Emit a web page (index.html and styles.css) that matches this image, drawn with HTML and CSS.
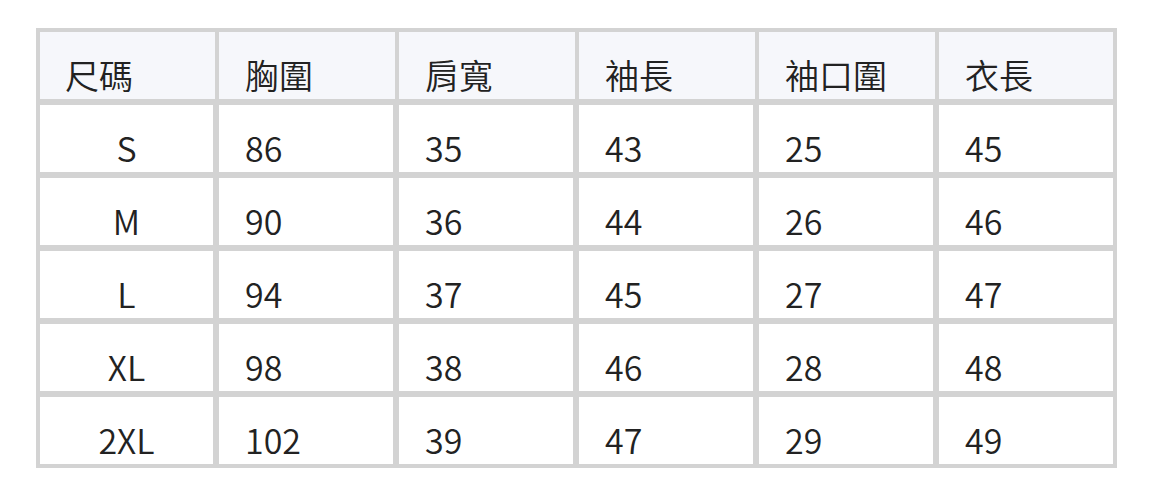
FILE: index.html
```html
<!DOCTYPE html>
<html lang="zh-Hant">
<head>
<meta charset="utf-8">
<title>尺碼表</title>
<link rel="stylesheet" href="styles.css">
</head>
<body>
<table class="size-table">
  <colgroup>
    <col class="c-first">
    <col class="c-mid">
    <col class="c-mid">
    <col class="c-mid">
    <col class="c-mid">
    <col class="c-last">
  </colgroup>
  <thead>
    <tr><th>尺碼</th><th>胸圍</th><th>肩寬</th><th>袖長</th><th>袖口圍</th><th>衣長</th></tr>
  </thead>
  <tbody>
    <tr><td>S</td><td>86</td><td>35</td><td>43</td><td>25</td><td>45</td></tr>
    <tr><td>M</td><td>90</td><td>36</td><td>44</td><td>26</td><td>46</td></tr>
    <tr><td>L</td><td>94</td><td>37</td><td>45</td><td>27</td><td>47</td></tr>
    <tr><td>XL</td><td>98</td><td>38</td><td>46</td><td>28</td><td>48</td></tr>
    <tr class="last"><td>2XL</td><td>102</td><td>39</td><td>47</td><td>29</td><td>49</td></tr>
  </tbody>
</table>
</body>
</html>
```
FILE: styles.css
```css
html, body {
  background: #ffffff;
}
body {
  margin: 28px 0 0 36px;
  font-family: "Noto Sans CJK TC", "Noto Sans", sans-serif;
  color: #222222;
}
.size-table {
  border-collapse: separate;
  border-spacing: 0;
  table-layout: fixed;
  width: 1081px;
  border: 4px solid #d3d3d3;
}
.c-first { width: 175px; }
.c-mid { width: 180px; }
.c-last { width: 178px; }

.size-table th,
.size-table td {
  font-size: 34px;
  line-height: 49px;
  height: 49px;
  padding: 18px 0 0 26px;
  text-align: left;
  vertical-align: top;
  font-weight: 350;
  white-space: nowrap;
  border: 0 solid #d3d3d3;
}
.size-table th {
  background: #f6f7fb;
}
.size-table th:first-child {
  padding-left: 25px;
}
.size-table th + th {
  border-left-width: 4px;
}
.size-table td {
  border-top-width: 6px;
  background: #ffffff;
}
.size-table td + td {
  border-left-width: 4px;
}
.size-table td:not(:last-child) {
  border-right-width: 2px;
}
.size-table td:first-child {
  text-align: center;
  padding-left: 0;
}
.size-table tr.last td {
  height: 48px;
  padding-top: 18px;
}
```
